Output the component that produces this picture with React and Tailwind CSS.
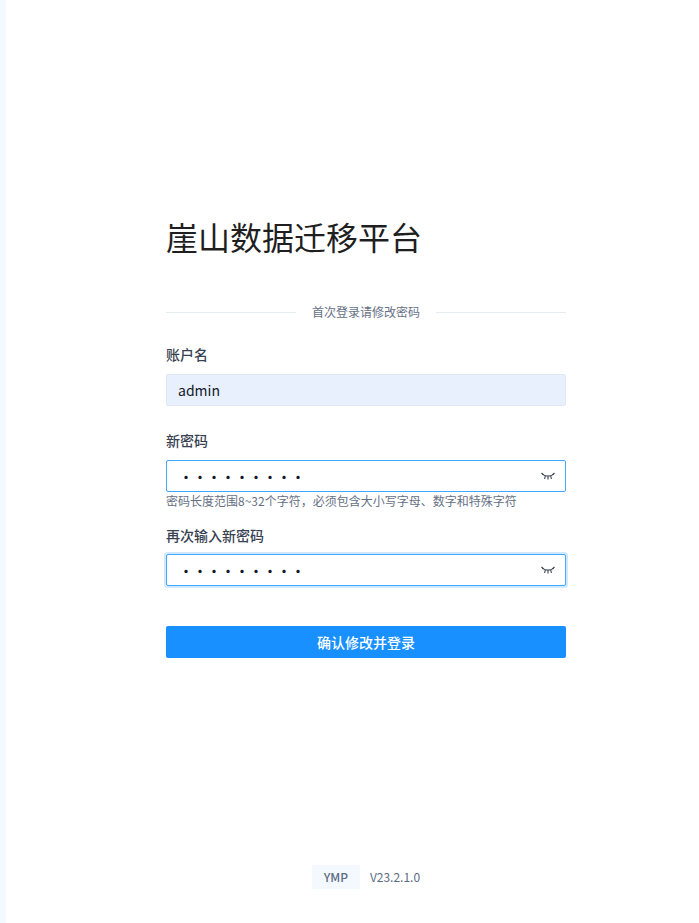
import React from 'react';

const font = { fontFamily: '"Noto Sans CJK SC", "Noto Sans", sans-serif' };

const EyeClosed = () => (
  <svg width="14" height="10" viewBox="0 0 14 10" fill="none" stroke="#374151" strokeWidth="1.1" className="shrink-0">
    <path d="M1.5 3C4 5.8 10 5.8 12.5 3" />
    <path d="M0.5 2L2.6 4M4.3 5L3.6 8M7 5.4V8.6M9.7 5L10.4 8M13.5 2L11.4 4" />
  </svg>
);

const PasswordField = ({ focused }) => (
  <div
    className={`flex h-8 items-center justify-between rounded-[2px] border border-[#40a9ff] bg-white pl-[12px] pr-[10px] ${
      focused ? 'shadow-[0_0_0_2px_rgba(24,144,255,0.2)]' : ''
    }`}
  >
    <input
      type="password"
      readOnly
      defaultValue="123456789"
      className="w-[300px] bg-transparent text-[14px] font-medium text-[#111827] outline-none"
    />
    <EyeClosed />
  </div>
);

export default function App() {
  return (
    <div className="flex h-screen bg-white" style={font}>
      <div className="w-[6px] shrink-0 bg-[#f4f8ff]" />
      <main className="ml-[160px] flex w-[400px] flex-col">
        <h1 className="mt-[212px] text-[32px] leading-[48px] font-normal text-[#1f1f1f]">崖山数据迁移平台</h1>

        <div className="mt-[42px] flex items-center">
          <div className="h-px w-[130px] bg-[#e5eaf0]" />
          <span className="flex-1 text-center text-[12px] leading-5 text-[#667085]">首次登录请修改密码</span>
          <div className="h-px w-[130px] bg-[#e5eaf0]" />
        </div>

        <label className="mt-[21px] text-[14px] leading-[22px] font-medium text-[#374151]">账户名</label>
        <div className="mt-[9px] flex h-8 items-center rounded-[2px] border border-[#e1e8f5] bg-[#e8f0fe] px-[11px] text-[14px] text-[#111827]">
          admin
        </div>

        <label className="mt-[23px] text-[14px] leading-[22px] font-medium text-[#374151]">新密码</label>
        <div className="mt-[9px]">
          <PasswordField />
        </div>
        <p className="text-[12px] leading-[18px] text-[#667085]">密码长度范围8~32个字符，必须包含大小写字母、数字和特殊字符</p>

        <label className="mt-[14px] text-[14px] leading-[22px] font-medium text-[#374151]">再次输入新密码</label>
        <div className="mt-[8px]">
          <PasswordField focused />
        </div>

        <button className="mt-[40px] h-8 rounded-[2px] bg-[#1890ff] text-[14px] font-medium text-white">确认修改并登录</button>

        <div className="mt-auto mb-[34px] flex items-center justify-center gap-[10px]">
          <span className="flex h-6 w-12 items-center justify-center bg-[#f4f8ff] text-[12px] font-medium text-[#5b6b82]">YMP</span>
          <span className="text-[12px] text-[#5b6b82]">V23.2.1.0</span>
        </div>
      </main>
    </div>
  );
}
